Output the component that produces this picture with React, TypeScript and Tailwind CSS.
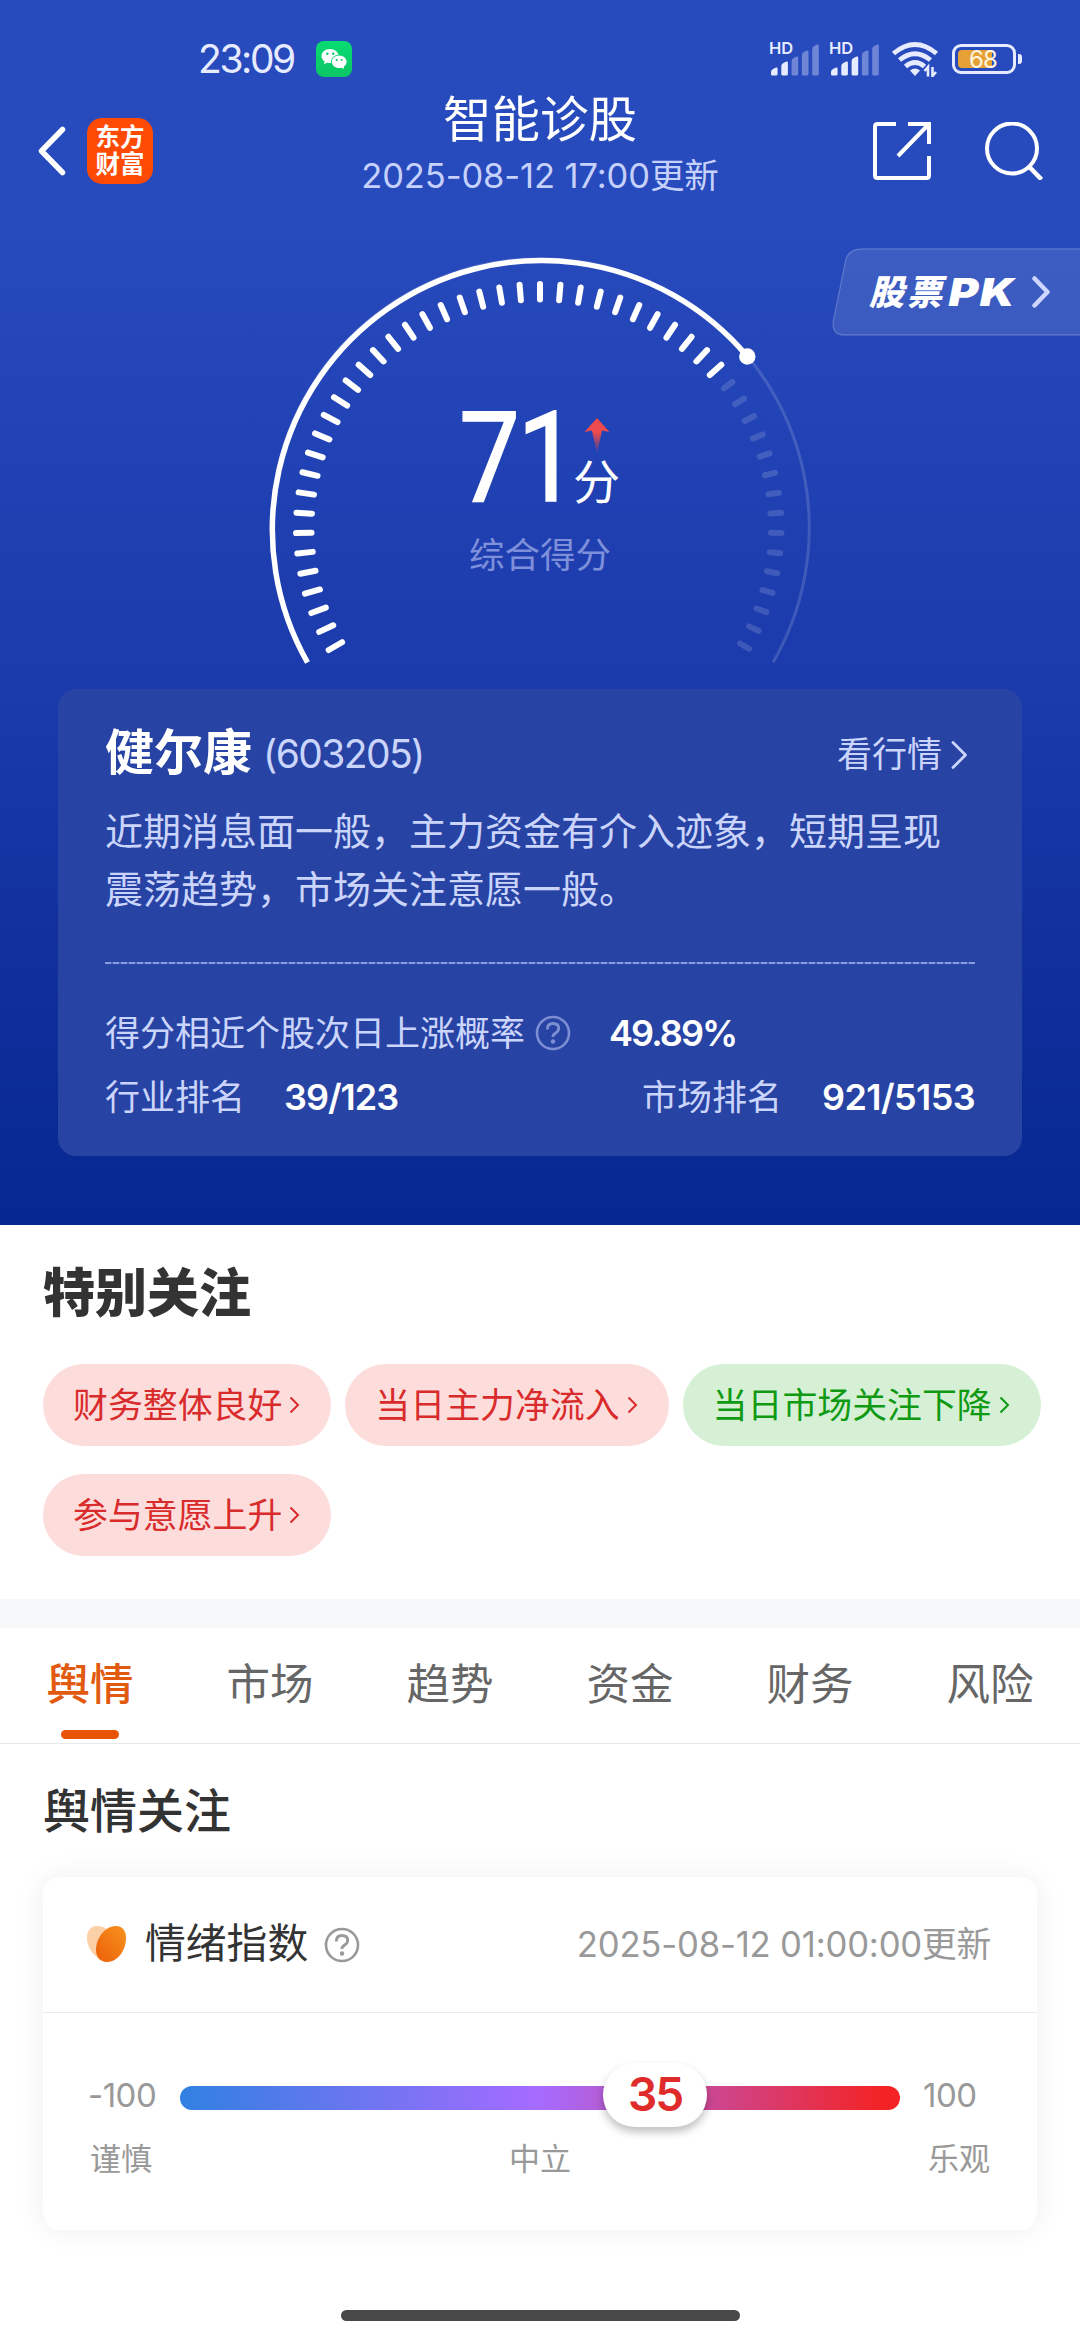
import { clsx } from 'clsx';

const ticks = Array.from({ length: 51 }, (_, i) => -120 + i * 4.8);

const tags = [
  { label: '财务整体良好', up: true },
  { label: '当日主力净流入', up: true },
  { label: '当日市场关注下降', up: false },
  { label: '参与意愿上升', up: true },
];

const tabs = ['舆情', '市场', '趋势', '资金', '财务', '风险'];

function Signal({ level }: { level: number }) {
  const tops = [23, 17, 12, 6, 0];
  return (
    <div className="relative w-[50px] h-[33px]">
      <span className="absolute left-0 -top-px text-[16.5px] leading-[13px] font-semibold">HD</span>
      <svg className="absolute left-0 top-0" width="52" height="34" viewBox="0 0 52 34" fill="currentColor">
        {tops.map((top, i) => (
          <path
            key={top}
            d={`M${2 + i * 10.3} ${top + 6}q0 -2 2 -3l3 -1.5q1.6 -.4 1.6 1.2V31q0 1.6 -1.6 1.6h-3.6q-1.4 0 -1.4 -1.6z`}
            opacity={i < level ? 1 : 0.38}
          />
        ))}
      </svg>
    </div>
  );
}

function StatusBar() {
  return (
    <div className="h-[78px] pt-10 flex items-center text-[#e6ebff]">
      <span className="ml-[198px] w-[118px] text-[39px] leading-[38px] tracking-[-2.4px]">23:09</span>
      <svg width="36" height="36" viewBox="0 0 36 36">
        <defs>
          <linearGradient id="wechat" x1="0" y1="0" x2="0" y2="1">
            <stop offset="0" stopColor="#07dc72" />
            <stop offset="1" stopColor="#0cc565" />
          </linearGradient>
        </defs>
        <rect width="36" height="36" rx="8" fill="url(#wechat)" />
        <path d="M14 8C9.300 8 5.500 11 5.500 15c0 2.300 1.200 4.200 3.100 5.500L8 23.200l3-1.500c1 .3 2 .4 3 .4 4.700 0 8.500-3.200 8.500-7.100S18.700 8 14 8z" fill="#fff" />
        <ellipse cx="23.200" cy="20.800" rx="8.300" ry="7.100" fill="#08d06b" />
        <path d="M23.200 14.500c-4.100 0-7.400 2.800-7.400 6.300s3.300 6.300 7.400 6.300c.9 0 1.700-.1 2.500-.4l2.500 1.300-.6-2.300c1.900-1.200 3-2.900 3-4.900 0-3.500-3.300-6.300-7.400-6.300z" fill="#fff" />
        <g fill="#08c767">
          <circle cx="11.400" cy="12.800" r="1.200" />
          <circle cx="17.200" cy="12.800" r="1.200" />
          <circle cx="20.700" cy="19" r="1" />
          <circle cx="25.700" cy="19" r="1" />
        </g>
      </svg>
      <div className="ml-auto mr-[58px] flex items-center">
        <Signal level={2} />
        <div className="w-[10px]" />
        <Signal level={3} />
        <svg className="ml-[12px]" width="48" height="36" viewBox="0 0 48 36" fill="none" stroke="currentColor" strokeWidth="4.800">
          <path d="M2.500 12.500Q24 -5.500 45.500 12.500" />
          <path d="M8.500 19Q24 6.500 39.500 19" />
          <path d="M14.500 25.500Q24 17.500 33.500 25.500" />
          <path d="M24 35l-5-5.500q5-4 10 0z" fill="currentColor" stroke="none" />
          <path d="M37 35.500V26l-3.500 4M41.500 26v9l3.500-4" strokeWidth="2.600" />
        </svg>
        <div className="relative ml-[13px] w-[70px] h-[30px] flex items-center">
          <div className="w-[64px] h-[30px] rounded-[9px] border-[3px] border-current p-[3px]">
            <div className="w-[34px] h-[18px] rounded-l-[4px] bg-[#e5a036]" />
          </div>
          <div className="ml-[2px] w-[4px] h-[10px] rounded-r-[3px] bg-current" />
          <span className="absolute left-[17px] top-0 text-[24px] leading-[31px] tracking-[-1px] text-[#fff4df]">68</span>
        </div>
      </div>
    </div>
  );
}

function NavBar() {
  return (
    <div className="h-[146px] grid grid-cols-[300px_1fr_300px] items-center text-white">
      <div className="flex items-center pl-[37px]">
        <svg width="29" height="50" viewBox="0 0 29 50" fill="none" stroke="currentColor" strokeWidth="5.500" strokeLinecap="round" strokeLinejoin="round">
          <path d="M25.500 3.500L4.500 25l21 21.500" />
        </svg>
        <div className="ml-[21px] w-[66px] h-[66px] rounded-[15px] bg-[#ff4a04] flex flex-col items-center justify-center text-[24.500px] leading-[27.500px] font-bold">
          <span>东方</span>
          <span>财富</span>
        </div>
      </div>
      <div className="text-center pb-[12px]">
        <h1 className="text-[48.500px] leading-[61px]">智能诊股</h1>
        <p className="text-[34.500px] leading-[52px] text-[#c6d1fb] tracking-[-0.1px] whitespace-nowrap">2025-08-12 17:00更新</p>
      </div>
      <div className="flex items-center justify-end pr-[37px]">
        <svg width="58" height="58" viewBox="0 0 58 58" fill="none" stroke="currentColor" strokeWidth="4" strokeLinejoin="round">
          <path d="M23 2H4.500Q2 2 2 4.500V53.500Q2 56 4.500 56H53.500Q56 56 56 53.500V34" />
          <path d="M35 2H56V22M55 3L25 34" strokeLinejoin="miter" />
        </svg>
        <svg className="ml-[53px]" width="59" height="58" viewBox="0 0 59 58" fill="none" stroke="currentColor" strokeWidth="4">
          <circle cx="28" cy="26.500" r="25" />
          <path d="M44.500 44L57.500 57.500" strokeWidth="4.500" />
        </svg>
      </div>
    </div>
  );
}

function Gauge() {
  return (
    <div className="relative h-[465px] flex justify-center">
      <svg width="600" height="465" viewBox="240 224 600 465" fill="none">
        <defs>
          <linearGradient id="rise" x1="0" y1="0" x2="0" y2="1">
            <stop offset="0.400" stopColor="#ec4a4c" />
            <stop offset="1" stopColor="#ec4a4c" stopOpacity="0" />
          </linearGradient>
        </defs>
        <path d="M307.500 662.500A269 269 0 1 1 773 662.500" stroke="#fff" strokeOpacity="0.150" strokeWidth="3" />
        <path d="M307.500 662.500A269 269 0 0 1 747.300 356.500" stroke="#fff" strokeWidth="5.500" />
        <circle cx="747.300" cy="356.500" r="8.200" fill="#fff" />
        {ticks.map((deg, i) => (
          <line
            key={i}
            x1="540"
            x2="540"
            y1={i > 35 ? 286.5 : 284}
            y2={i > 35 ? 297 : 299.5}
            stroke="#fff"
            strokeOpacity={i > 35 ? 0.15 : 1}
            strokeWidth="6"
            strokeLinecap="round"
            transform={`rotate(${deg} 540 528)`}
          />
        ))}
        <path d="M597 418L609.500 432 602 430.500 597 454 592 430.500 584.500 432z" fill="url(#rise)" />
      </svg>
      <div className="absolute top-[174px] left-[459px] w-[110px] h-[120px] text-[126px] leading-[120px] tracking-[-3px] text-white font-['Roboto',sans-serif] origin-left scale-x-[0.86] [-webkit-text-stroke:1.5px_white]">71</div>
      <div className="absolute top-[230px] left-[573px] text-[47px] leading-[56px] text-white">分</div>
      <div className="absolute top-[307px] w-full text-center text-[35.500px] leading-[50px] text-[#7f90da]">综合得分</div>
      <div className="absolute right-0 top-[24px] w-[248px] h-[88px]">
        <svg className="absolute inset-0" width="248" height="88" viewBox="0 0 248 88">
          <path d="M260 .8H30Q16 .8 13.500 13L1.300 73Q-.5 87 12 87H260z" fill="#fff" fillOpacity="0.110" stroke="#fff" strokeOpacity="0.200" strokeWidth="1.300" />
        </svg>
        <div className="relative h-full flex items-center pl-[37px] text-[35px] font-black italic text-white whitespace-nowrap">
          <span className="tracking-[3px]">股票</span>
          <span className="w-[77px] text-[38px] origin-left scale-x-[1.2] pl-[3px] tracking-[1px]">PK</span>
          <svg className="ml-[9px]" width="20" height="32" viewBox="0 0 20 32" fill="none" stroke="#ccd6ff" strokeWidth="4.500" strokeLinecap="round" strokeLinejoin="round">
            <path d="M3.500 2.500L16.500 16l-13 13.500" />
          </svg>
        </div>
      </div>
    </div>
  );
}

function Help({ className }: { className?: string }) {
  return (
    <svg className={className} width="36" height="36" viewBox="0 0 36 36" fill="none" stroke="currentColor" strokeWidth="2.600">
      <circle cx="18" cy="18" r="16" />
      <path d="M12.300 14.500q0-6 5.700-6t5.700 5q0 2.500-3 4.500t-2.700 4" strokeWidth="2.800" />
      <circle cx="18" cy="26.500" r="2.200" fill="currentColor" stroke="none" />
    </svg>
  );
}

function StockCard() {
  return (
    <section className="mx-[58px] h-[467px] rounded-[18px] bg-[#2743a4] px-[47px] pt-[33px] text-[35px] text-[#cbd5fb]">
      <div className="flex items-center h-[62px]">
        <h2 className="text-[49px] font-bold text-white">健尔康</h2>
        <span className="ml-[11px] mt-[3px] text-[39px] tracking-[-1.6px]">(603205)</span>
        <span className="ml-auto mt-[3px]">看行情</span>
        <svg className="ml-[9px] mt-[3px] mr-[7px]" width="17" height="30" viewBox="0 0 17 30" fill="none" stroke="currentColor" strokeWidth="2.800" strokeLinecap="round" strokeLinejoin="round">
          <path d="M2 2.500L14.500 15 2 27.500" />
        </svg>
      </div>
      <p className="mt-[18px] text-[38px] leading-[58px] whitespace-nowrap">
        近期消息面一般，主力资金有介入迹象，短期呈现
        <br />
        震荡趋势，市场关注意愿一般。
      </p>
      <div className="mt-[44px] h-[2px] bg-[repeating-linear-gradient(90deg,#8b9ce0_0_6px,#4f68bd_6px_8px)]" />
      <div className="mt-[37px] flex items-center h-[64px]">
        <span>得分相近个股次日上涨概率</span>
        <Help className="ml-[10px] text-[#7d8fd2]" />
        <strong className="ml-[38px] font-semibold text-white text-[36px] tracking-[-1.9px]">49.89%</strong>
      </div>
      <div className="flex items-center h-[64px]">
        <span>行业排名</span>
        <strong className="ml-[39px] font-semibold text-white text-[36px] tracking-[-1px]">39/123</strong>
        <span className="ml-auto">市场排名</span>
        <strong className="ml-[40px] font-semibold text-white text-[36px] tracking-[-0.6px]">921/5153</strong>
      </div>
    </section>
  );
}

function Attention() {
  return (
    <section className="h-[374px] pl-[43px] pr-[38px] pt-[38px]">
      <h2 className="text-[52px] leading-[62px] font-black text-[#333]">特别关注</h2>
      <div className="mt-[39px] flex flex-wrap gap-x-[14px] gap-y-[28px]">
        {tags.map((tag) => (
          <div
            key={tag.label}
            className={clsx(
              'flex items-center h-[82px] rounded-full pl-[30px] pr-[31px] text-[34.900px] whitespace-nowrap',
              tag.up ? 'bg-[#fcdddc] text-[#d92b2b]' : 'bg-[#d5f0d5] text-[#0f9a12]'
            )}
          >
            {tag.label}
            <svg className="ml-[7px]" width="11" height="18" viewBox="0 0 11 18" fill="none" stroke="currentColor" strokeWidth="2">
              <path d="M1.500 1.500L9 9l-7.500 7.500" />
            </svg>
          </div>
        ))}
      </div>
    </section>
  );
}

function Mood() {
  return (
    <section className="px-[43px] pt-[36px]">
      <h2 className="text-[47px] leading-[62px] font-medium text-[#333]">舆情关注</h2>
      <div className="mt-[35px] h-[353px] rounded-[17px] bg-white shadow-[0_0_30px_rgba(0,0,0,0.07)]">
        <div className="flex items-center h-[136px] px-[44px] border-b border-[#ebebeb]">
          <svg width="39" height="38" viewBox="0 0 39 38" className="-mt-px">
            <defs>
              <linearGradient id="petal" x1="1" y1="0" x2="0" y2="1">
                <stop offset="0" stopColor="#f7931e" />
                <stop offset="1" stopColor="#ec5f09" />
              </linearGradient>
            </defs>
            <path d="M0 13C0 5 4 1 10 1q6 0 11 4l2 14-9 16C5 30 0 21 0 13z" fill="#fbd0a6" />
            <path d="M39 13c0 12-8 24-19 24-7 0-11-5-11-12C9 13 18 1 29 1c6 0 10 4 10 12z" fill="url(#petal)" />
          </svg>
          <h3 className="ml-[19px] -mt-[2px] text-[40.800px] text-[#333]">情绪指数</h3>
          <Help className="ml-[16px] text-[#999]" />
          <span className="ml-auto mr-[2px] text-[34.700px] text-[#999] tracking-[-0.2px]">2025-08-12 01:00:00更新</span>
        </div>
        <div className="relative mt-[59px] flex items-center h-[52px] px-[45px] text-[33px] leading-[52px] tracking-[-0.5px] text-[#999]">
          <span className="w-[92px] -mt-[6px]">-100</span>
          <div className="w-[720px] h-[24px] rounded-full bg-[linear-gradient(90deg,#3180e2_0%,#a66bff_50%,#f42222_98%)]" />
          <span className="ml-[23px] -mt-[6px]">100</span>
          <div className="absolute left-[560px] -top-[9px] w-[104px] h-[64px] rounded-full bg-white shadow-[0_5px_8px_rgba(0,0,0,0.25)] text-center text-[46px] leading-[62px] font-semibold tracking-[-2px] text-[#e02b2b]">
            35
          </div>
        </div>
        <div className="mt-[9px] flex justify-between px-[47px] text-[31px] leading-[52px] text-[#999]">
          <span>谨慎</span>
          <span>中立</span>
          <span>乐观</span>
        </div>
      </div>
    </section>
  );
}

export default function App() {
  return (
    <main className="w-[1080px] h-[2340px] overflow-hidden flex flex-col bg-white font-['Inter','Noto_Sans_CJK_SC',sans-serif]">
      <header className="h-[1225px] shrink-0 bg-[linear-gradient(180deg,#274abd_0,#274abd_220px,#1b3aab_690px,#062690_1225px)]">
        <StatusBar />
        <NavBar />
        <Gauge />
        <StockCard />
      </header>
      <Attention />
      <div className="h-[29px] shrink-0 bg-[#f7f8fa]" />
      <nav className="grid grid-cols-6 h-[116px] shrink-0 border-b border-[#e8e8e8]">
        {tabs.map((tab, i) => (
          <div
            key={tab}
            className={clsx(
              'flex flex-col items-center text-[43.500px] leading-[60px] pt-[26px]',
              i === 0 ? 'text-[#e25a10] font-medium' : 'text-[#666]'
            )}
          >
            {tab}
            {i === 0 && <i className="mt-[16px] w-[58px] h-[9px] rounded-full bg-[#e85403]" />}
          </div>
        ))}
      </nav>
      <Mood />
      {/* Home indicator */}
      <div className="mt-[80px] mx-auto w-[399px] h-[11px] rounded-full bg-[#484848]" />
    </main>
  );
}
